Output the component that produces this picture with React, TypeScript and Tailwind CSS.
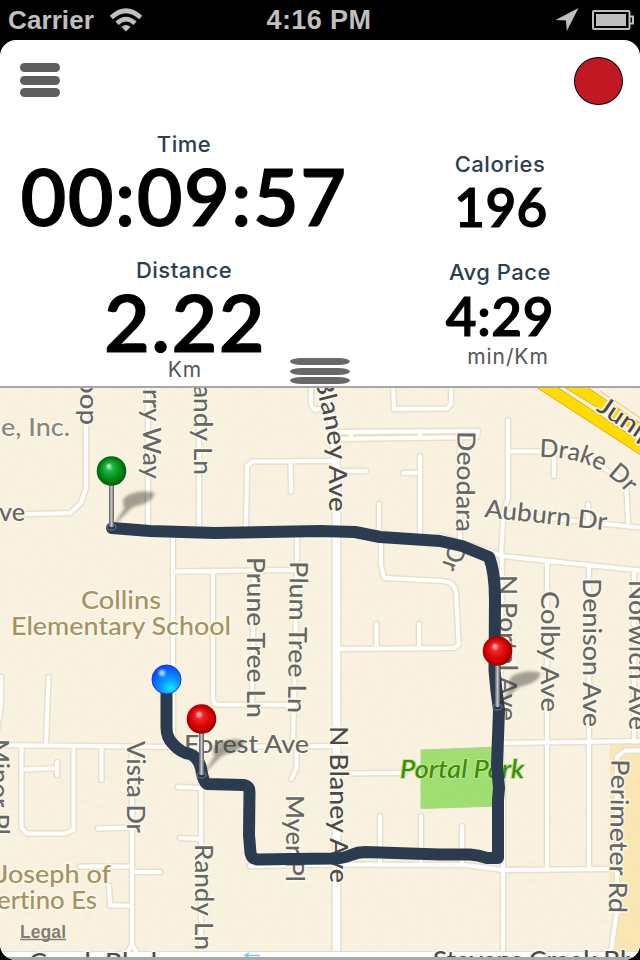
import type { ReactNode } from "react";

const MINOR_ROADS = [
  "M86 380V488L81 503L70 513L-5 515",
  "M148 380V527",
  "M199 380V530",
  "M173 535V747",
  "M173 571.5L297 570",
  "M213 571V698Q213 704 218 704.5L293 705",
  "M297 535V571L294 705L293 740L296.500 745V768L291.500 779",
  "M254 571L252 704",
  "M311 380V405L315 410L331 406",
  "M393 380L394 409L447 408.500L451 404V380",
  "M338 432L478 431L477 437L338 439",
  "M351 432V438",
  "M420 431V437",
  "M246 530L247 466L252 461.500L334 461",
  "M290.500 462L291 492",
  "M338 471H366",
  "M420 456V535M403 473H420",
  "M379 504V532M381 540V565L384 578L443 581Q454 582 456 592L458.500 640V645L454 648L338 649",
  "M376.500 624V648M419 624V648",
  "M460 438L460 540L457 546",
  "M508 420V498L503.500 512L501 557",
  "M508 451.500H560Q585 450 601 467L626 481L628 522",
  "M554 453V476M588 504V519",
  "M503 513L565 520L645 528",
  "M440 536L495 553L502 556L645 571",
  "M547 562V869M589 566V869M634 570V742",
  "M502 556L500 743L503 790V957",
  "M500 743L640 741",
  "M250 866L338 864.500L465 865L503 870L608 869",
  "M380 816V863M421 816V863M462 826V863",
  "M338 773.500L405 773",
  "M645 750.500H625L617 757V910L611 952",
  "M-5 745L173 747L336 746",
  "M1 677V705L-3 730M48.500 677L46 745",
  "M21.500 747V828L27 833.500H65L73.500 830V747M22 769.500L57 768M57 762V775",
  "M101.500 747V780",
  "M132 747V945L126 954M132 945L138 954",
  "M98 828.500L132 827.500M80 866.500H132M132 872H160M109 886L110 905.500H132",
  "M201 775V954M178 787L201 788M180 838L201 839",
  "M293 800V862",
];

const MAIN_ROAD = "M326 380L334 440L336.500 470V960";

const ROUTE =
  "M166.500 680V726Q166 737 173 744Q181 753 190 754Q198 757 201 768Q203 782 207 784L243 785Q249.500 786 249.500 792L249 835L250.500 853Q252 860 260 859.500L290 859L335 858.500Q345 858 351 855Q358 852 365 852L440 854.500L470 854.500Q478 855 487 858L498 858L498 800L499 788L497 765L499 710Q496 690 494.500 670L495 600Q495 572 489 557L462 546L440 541L380 537L355 532L320 531L215 533L150 531L112 528";

type LabelProps = {
  x: number;
  y: number;
  len?: number;
  angle?: number;
  size?: number;
  tone?: "road" | "main" | "place" | "muted" | "park";
  children: ReactNode;
};

const TONES = {
  road: "fill-[#666664]",
  main: "fill-[#4b4a4a]",
  place: "fill-[#a59261]",
  muted: "fill-[#88877f]",
  park: "fill-[#3f890b] italic",
};

const LABEL = "font-['Lato','Open_Sans',sans-serif] font-medium [font-variant-ligatures:none]";

function Label({ x, y, len, angle = 0, size = 25, tone = "road", children }: LabelProps) {
  return (
    <text
      transform={`translate(${x} ${y}) rotate(${angle})`}
      fontSize={size}
      textLength={len}
      lengthAdjust="spacingAndGlyphs"
      stroke={tone === "park" ? "#b9e88f" : "#fbf7ea"}
      strokeWidth={tone === "park" ? 2 : 3}
      strokeLinejoin="round"
      paintOrder="stroke"
      className={`${LABEL} ${TONES[tone]}`}
    >
      {children}
    </text>
  );
}

function Pin({ x, y, color }: { x: number; y: number; color: string }) {
  return (
    <g transform={`translate(${x} ${y})`}>
      <g filter="url(#soft)" fill="#3b3a34" opacity=".45">
        <path d="M1 56L13 37Q8 27 19 23Q32 18 43 22Q42 30 29 34Q22 35 18 39Z" />
      </g>
      <ellipse cx="0" cy="56" rx="4.500" ry="3" fill="#2c3b4d" stroke="#71808d" />
      <rect x="-2.500" y="11" width="5" height="45" rx="1" fill="url(#steel)" />
      <circle r="14.800" fill={`url(#${color})`} />
    </g>
  );
}

function Ball({ id, light, mid, dark, glow }: { id: string; light: string; mid: string; dark: string; glow: string }) {
  return (
    <radialGradient id={id} cx=".5" cy=".5" r=".5" fx=".4" fy=".32">
      <stop offset="0" stopColor={light} />
      <stop offset=".28" stopColor={glow} />
      <stop offset=".68" stopColor={mid} />
      <stop offset="1" stopColor={dark} />
    </radialGradient>
  );
}

function RouteMap() {
  return (
    <svg viewBox="0 388 640 569" width="640" height="569" className="block bg-[#f9f2e0]">
      <defs>
        <Ball id="green" light="#c8ffd8" glow="#1fb447" mid="#008c14" dark="#00600a" />
        <Ball id="red" light="#ffe0e0" glow="#f02525" mid="#d80000" dark="#9c0000" />
        <radialGradient id="blue" cx=".65" cy=".8" r=".8">
          <stop offset="0" stopColor="#10eaff" />
          <stop offset=".45" stopColor="#0893ff" />
          <stop offset="1" stopColor="#0546ff" />
        </radialGradient>
        <linearGradient id="steel">
          <stop offset="0" stopColor="#5b5b60" />
          <stop offset=".5" stopColor="#c6c6ca" />
          <stop offset="1" stopColor="#56565c" />
        </linearGradient>
        <filter id="soft" x="-30%" y="-30%" width="160%" height="160%">
          <feGaussianBlur stdDeviation="1.800" />
        </filter>
        <filter id="paper" x="0" y="0" width="100%" height="100%">
          <feTurbulence type="fractalNoise" baseFrequency=".12 .2" numOctaves="2" seed="4" />
          <feColorMatrix values="0 0 0 0 .6  0 0 0 0 .52  0 0 0 0 .25  .5 0 0 0 -.2" />
        </filter>
        <filter id="grass" x="0" y="0" width="100%" height="100%">
          <feTurbulence type="fractalNoise" baseFrequency=".3" numOctaves="2" seed="8" result="noise" />
          <feColorMatrix in="noise" values="0 0 0 0 .35  0 0 0 0 .7  0 0 0 0 .2  3 0 0 0 -1.2" />
          <feComposite in2="SourceGraphic" operator="in" />
        </filter>
        <path id="blaney" d="M314.500 379L319 398Q328 434 329 458V520" />
        <path id="drake" d="M539 457Q575 457 597 469Q615 478 630 497" />
      </defs>

      <path d="M610 743H640V952H612L616 910L608 870Z" fill="#fbe7b4" />
      <rect x="0" y="388" width="640" height="569" filter="url(#paper)" opacity=".2" />
      <path d="M421 750L499 747V806L421 808.500Z" fill="#9fe06d" stroke="#b6cf8c" />
      <path d="M421 750L499 747V806L421 808.500Z" filter="url(#grass)" />

      <g fill="none" strokeLinejoin="round" strokeLinecap="round">
        <path d={MINOR_ROADS.join("")} stroke="#e7e1c9" strokeWidth="7" />
        <path d={MAIN_ROAD} stroke="#e7e1c9" strokeWidth="10.500" />
        <path d={MINOR_ROADS.join("")} stroke="#fff" strokeWidth="4" />
        <path d={MAIN_ROAD} stroke="#fff" strokeWidth="7.500" />
      </g>

      <path d="M535 387L652 463V428L590 387Z" fill="#fff7dc" />
      <path d="M536 387L650 461V448L557 387Z" fill="#ffdc00" stroke="#e3a32d" />
      <path d="M564 387L650 440V430L587 387Z" fill="#ffdc00" stroke="#e3a32d" />
      <path d="M600 391L645 421" stroke="#f5bb73" />
      <path d="M0 952H640V958H0Z" fill="#fff" />
      <path d="M0 951.500H126M138 951.500H640" stroke="#e2dcc6" />

      <Label x={79.5} y={378} len={47} angle={90}>oop</Label>
      <Label x={142.5} y={389} len={90} angle={90}>rry Way</Label>
      <Label x={193.5} y={385} len={90} angle={90}>andy Ln</Label>
      <Label x={1} y={436} len={69} tone="muted">e, Inc.</Label>
      <Label x={-1} y={521} len={26}>ve</Label>
      <text fontSize="25" stroke="#fbf7ea" strokeWidth="3" paintOrder="stroke" className={`${LABEL} ${TONES.main}`}>
        <textPath href="#blaney" textLength="134" lengthAdjust="spacingAndGlyphs">Blaney Ave</textPath>
      </text>
      <Label x={457.5} y={431} len={101} angle={90.8}>Deodara</Label>
      <Label x={450} y={542} len={27} angle={109}>Dr</Label>
      <text fontSize="25" stroke="#fbf7ea" strokeWidth="3" paintOrder="stroke" className={`${LABEL} ${TONES.road}`}>
        <textPath href="#drake" textLength="99" lengthAdjust="spacingAndGlyphs">Drake Dr</textPath>
      </text>
      <Label x={484} y={517} len={123} angle={6.2}>Auburn Dr</Label>
      <Label x={595.5} y={410} len={66} angle={34} tone="main">Junip</Label>
      <Label x={81} y={609} len={80} tone="place">Collins</Label>
      <Label x={11} y={635} len={220} tone="place">Elementary School</Label>
      <Label x={247} y={557} len={161} angle={90}>Prune Tree Ln</Label>
      <Label x={290} y={561} len={152} angle={90.8}>Plum Tree Ln</Label>
      <Label x={498.5} y={575} len={146} angle={90}>N Portal Ave</Label>
      <Label x={540.5} y={591} len={121} angle={90}>Colby Ave</Label>
      <Label x={583} y={578} len={149} angle={90}>Denison Ave</Label>
      <Label x={628.5} y={580} len={150} angle={90}>Norwich Ave</Label>
      <Label x={184} y={752.5} len={125}>Forest Ave</Label>
      <Label x={329.5} y={726} len={157} angle={90} tone="main">N Blaney Ave</Label>
      <Label x={-9} y={739} len={96} angle={90}>Minor Pl</Label>
      <Label x={126.5} y={741} len={92} angle={90}>Vista Dr</Label>
      <Label x={195} y={844} len={106} angle={90}>Randy Ln</Label>
      <Label x={286} y={795} len={87} angle={90}>Myer Pl</Label>
      <Label x={611.5} y={759} len={154} angle={91}>Perimeter Rd</Label>
      <Label x={400} y={778} len={124} tone="park">Portal Park</Label>
      <Label x={-3} y={883} len={114} tone="place">Joseph of</Label>
      <Label x={-3} y={909} len={100} tone="place">ertino Es</Label>
      <Label x={29} y={971} len={128} tone="main">Creek Blvd</Label>
      <Label x={433} y={969} len={221} tone="main">Stevens Creek Blvd</Label>
      <path d="M260 955.500H245M249 953L245 955.500L249 958" fill="none" stroke="#78c6f5" strokeWidth="1.500" />

      <path d={ROUTE} fill="none" stroke="#2c3c50" strokeWidth="12" strokeLinecap="round" strokeLinejoin="round" />
      <Pin x={111.5} y={471} color="green" />
      <Pin x={497.5} y={651} color="red" />
      <Pin x={201.5} y={719} color="red" />
      <circle cx="166.500" cy="679.500" r="14.500" fill="url(#blue)" stroke="#1631e8" />
      <circle cx="162" cy="673" r="3" fill="#c5e6ff" filter="url(#soft)" />

      <text x="20" y="937.500" fontSize="17.500" textLength="46" stroke="#fbf7ea" strokeWidth="2" paintOrder="stroke" className="fill-[#827e72] font-['Liberation_Sans',Arial,sans-serif] font-bold">
        Legal
      </text>
      <path d="M20 939.500H66" stroke="#827e72" strokeWidth="1.500" />
    </svg>
  );
}

function StatusBar() {
  return (
    <header className="grid h-10 grid-cols-3 items-center bg-black font-['Liberation_Sans',Arial,sans-serif] text-[27px] font-bold text-[#bfbfbf]">
      <div className="flex items-center pl-2">
        <span className="w-[101px] text-[26px] tracking-[0.1px]">Carrier</span>
        <svg width="33" height="24" viewBox="0 0 33 24" fill="none" stroke="#bfbfbf" strokeWidth="4.600">
          <path d="M2.300 9.500Q17 -4 31.700 9.500M8 15.300Q17 7 26 15.300" />
          <path d="M12.500 19Q17 14.800 21.500 19L17 23.500Z" fill="#bfbfbf" stroke="none" />
        </svg>
      </div>
      <span className="-ml-0.5 text-center tracking-[0.4px]">4:16 PM</span>
      <div className="flex items-center justify-end gap-[13px] pr-1.5">
        <svg width="24" height="24" viewBox="0 0 24 24">
          <path d="M23.500 0L11.800 23L11 12.500L.5 12Z" fill="#bfbfbf" />
        </svg>
        <svg width="42" height="20" viewBox="0 0 42 20" fill="none" stroke="#bfbfbf" strokeWidth="2">
          <rect x="1" y="1" width="36.500" height="18" rx="1" />
          <path d="M38 6.500H41V13.500H38" />
          <rect x="4" y="4" width="30" height="12" fill="#bfbfbf" stroke="none" />
        </svg>
      </div>
    </header>
  );
}

const CAPTION = "font-['Inter',sans-serif] text-[22px] leading-[26px] font-medium tracking-[0.5px] text-[#2c3e50]";
const UNIT = "font-['Inter',sans-serif] text-[21px] leading-6 tracking-[0.9px] text-[#555]";
const VALUE = "font-['Lato',sans-serif] font-semibold text-black";

export default function App() {
  return (
    <div className="h-[960px] w-[640px] overflow-hidden bg-black">
      <StatusBar />
      <main className="h-[920px] overflow-hidden rounded-2xl bg-white">
        <section className="flex h-[348px] flex-col border-b-2 border-[#a6a8a8]">
          <div className="flex h-20 items-center justify-between pr-[17px] pl-5">
            <button className="flex flex-col gap-[3.5px]" aria-label="Menu">
              <span className="h-[9px] w-10 rounded-full bg-[#5e5e5e]" />
              <span className="h-[9px] w-10 rounded-full bg-[#5e5e5e]" />
              <span className="h-[9px] w-10 rounded-full bg-[#5e5e5e]" />
            </button>
            <button className="mt-0.5 h-12 w-[49px] rounded-[50%] border border-black bg-[#c01924]" aria-label="Record" />
          </div>
          <div className="flex flex-1">
            <div className="flex w-[368px] flex-col items-center pt-[11px]">
              <span className={CAPTION}>Time</span>
              <span className={`${VALUE} mt-[5px] h-[95px] text-[79px] leading-[68px] tracking-[1.5px] [-webkit-text-stroke:1.2px_black]`}>00:09:57</span>
              <span className={CAPTION}>Distance</span>
              <span className={`${VALUE} mt-1 ml-0.5 h-[71px] text-[79px] leading-[70px] tracking-[1.5px] [-webkit-text-stroke:1.2px_black]`}>2.22</span>
              <span className={`${UNIT} ml-0.5`}>Km</span>
            </div>
            <div className="flex w-[264px] flex-col items-center pt-[31px]">
              <span className={CAPTION}>Calories</span>
              <span className={`${VALUE} mt-[3px] ml-0.5 text-[53px] leading-[54px] tracking-[0.4px] [-webkit-text-stroke:1.2px_black]`}>196</span>
              <span className={`${CAPTION} mt-[25px]`}>Avg Pace</span>
              <span className={`${VALUE} mt-1 h-14 text-[53px] leading-[54px] tracking-[0.7px] [-webkit-text-stroke:1.2px_black]`}>4:29</span>
              <span className={`${UNIT} ml-4`}>min/Km</span>
            </div>
          </div>
          <div className="-mt-7 ml-[290px] flex h-7 flex-col gap-[2.5px]">
            <span className="h-[7px] w-[60px] rounded-[12px/50%] bg-[#686868]" />
            <span className="h-[7px] w-[60px] rounded-[12px/50%] bg-[#686868]" />
            <span className="h-[7px] w-[60px] rounded-[12px/50%] bg-[#686868]" />
          </div>
        </section>
        <section className="border-b-[3px] border-[#a9a9a9]">
          <RouteMap />
        </section>
      </main>
    </div>
  );
}
